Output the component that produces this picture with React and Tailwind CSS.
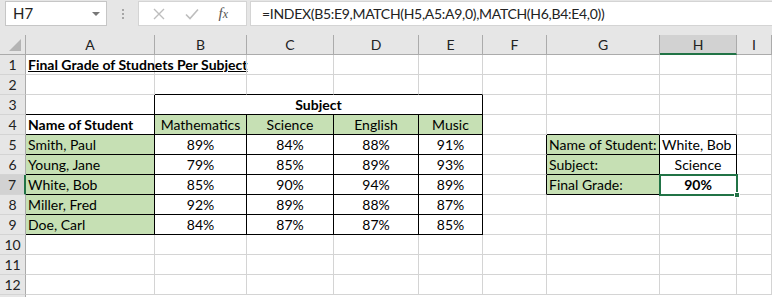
import { useState } from "react";

const cols = ["A", "B", "C", "D", "E", "F", "G", "H", "I"];

const grades = [
    ["Smith, Paul", "89%", "84%", "88%", "91%"],
    ["Young, Jane", "79%", "85%", "89%", "93%"],
    ["White, Bob", "85%", "90%", "94%", "89%"],
    ["Miller, Fred", "92%", "89%", "88%", "87%"],
    ["Doe, Carl", "84%", "87%", "87%", "85%"],
];

const lookup = [
    ["Name of Student:", "White, Bob", "text-left"],
    ["Subject:", "Science", "text-center"],
    ["Final Grade:", "90%", "text-center font-bold"],
];

// cell with its own right/bottom gridline, like Excel draws them
const Cell = ({ children, r = "grid", b = "grid", className = "" }) => {
    const right = r === "black" ? "border-r-black" : "border-r-[#d4d4d4]";
    const bottom = b === "black" ? "border-b-black" : "border-b-[#d4d4d4]";
    return (
        <div className={`h-[20px] border-r border-b ${right} ${bottom} px-[2px] leading-[19px] whitespace-nowrap overflow-visible ${className}`}>
            {children}
        </div>
    );
};

const RowHead = ({ n, active }) => (
    <div
        className={`h-[20px] border-b border-r border-b-[#d4d4d4] text-center leading-[19px] text-[#222] ${
            active ? "bg-[#d2d2d2] border-r-2 border-r-[#217346]" : "bg-[#e6e6e6] border-r-[#ababab]"
        }`}
    >
        {n}
    </div>
);

const App = () => {
    const [active] = useState("H7");

    return (
        <div className="w-[772px] h-[297px] overflow-hidden bg-white font-['Lato',sans-serif] text-[14px] text-black">
            {/* formula bar */}
            <div className="h-[35px] bg-[#e6e6e6] flex items-start pt-[1px]">
                <div className="ml-[5px] w-[102px] h-[25px] bg-white border border-[#c6c6c6] flex items-center justify-between pl-[7px] pr-[6px]">
                    <span className="text-[15px] text-[#222]">{active}</span>
                    <span className="w-0 h-0 border-l-[4px] border-r-[4px] border-t-[4px] border-l-transparent border-r-transparent border-t-[#777]" />
                </div>
                <div className="w-[31px] h-[25px] flex flex-col items-center justify-center gap-[2px]">
                    <span className="w-[2px] h-[2px] bg-[#a6a6a6]" />
                    <span className="w-[2px] h-[2px] bg-[#a6a6a6]" />
                    <span className="w-[2px] h-[2px] bg-[#a6a6a6]" />
                </div>
                <div className="w-[109px] h-[25px] bg-white border border-[#d4d4d4] flex items-center justify-around pl-[4px] pr-[8px]">
                    <svg width="12" height="12" viewBox="0 0 12 12">
                        <path d="M1 1 L11 11 M11 1 L1 11" stroke="#bdbdbd" strokeWidth="1.4" fill="none" />
                    </svg>
                    <svg width="14" height="12" viewBox="0 0 14 12">
                        <path d="M1 6.5 L5 10.5 L13 1.5" stroke="#bdbdbd" strokeWidth="1.6" fill="none" />
                    </svg>
                    <span className="font-['Liberation_Serif',serif] italic text-[15px] text-[#555]">
                        f<span className="text-[12px]">x</span>
                    </span>
                </div>
                <div className="ml-[3px] flex-1 h-[25px] bg-white border border-[#d4d4d4] border-r-0 flex items-center pl-[11px]">
                    <span className="text-[14px] tracking-[-0.3px] text-[#222]">=INDEX(B5:E9,MATCH(H5,A5:A9,0),MATCH(H6,B4:E4,0))</span>
                </div>
            </div>

            {/* sheet */}
            <div className="grid grid-cols-[26px_129px_92px_87px_85px_64px_64px_113px_77px_1fr]">
                {/* column headers */}
                <div className="h-[20px] bg-[#e6e6e6] border-r border-b border-[#ababab] relative">
                    <svg className="absolute right-[4px] bottom-[3px]" width="12" height="12" viewBox="0 0 12 12">
                        <path d="M12 0 L12 12 L0 12 Z" fill="#b4b4b4" />
                    </svg>
                </div>
                {cols.map((c) => (
                    <div
                        key={c}
                        className={`h-[20px] border-r border-r-[#ababab] text-center leading-[19px] text-[#222] ${
                            c === "H" ? "bg-[#d2d2d2] border-b-2 border-b-[#217346]" : "bg-[#e6e6e6] border-b border-b-[#ababab]"
                        }`}
                    >
                        {c}
                    </div>
                ))}

                {/* row 1 */}
                <RowHead n={1} />
                <Cell className="font-bold underline">Final Grade of Studnets Per Subject</Cell>
                <Cell /><Cell /><Cell /><Cell /><Cell /><Cell /><Cell /><Cell />

                {/* row 2 */}
                <RowHead n={2} />
                <Cell />
                <Cell b="black" /><Cell b="black" /><Cell b="black" /><Cell b="black" />
                <Cell /><Cell /><Cell /><Cell />

                {/* row 3 */}
                <RowHead n={3} />
                <Cell r="black" b="black" />
                <div className="col-span-4 h-[20px] border-r border-b border-black text-center font-bold leading-[19px]">Subject</div>
                <Cell /><Cell /><Cell /><Cell />

                {/* row 4 */}
                <RowHead n={4} />
                <Cell r="black" b="black" className="font-bold">Name of Student</Cell>
                {["Mathematics", "Science", "English", "Music"].map((s) => (
                    <Cell key={s} r="black" b="black" className="bg-[#c6e0b4] text-center">{s}</Cell>
                ))}
                <Cell /><Cell b="black" /><Cell b="black" /><Cell />

                {/* rows 5-9 */}
                {grades.map((row, i) => {
                    const n = i + 5;
                    const lk = lookup[i];
                    return [
                        <RowHead key={`h${n}`} n={n} active={n === 7} />,
                        <Cell key={`a${n}`} r="black" b="black" className="bg-[#c6e0b4]">{row[0]}</Cell>,
                        ...row.slice(1).map((v, j) => (
                            <Cell key={`v${n}${j}`} r="black" b="black" className="text-center">{v}</Cell>
                        )),
                        <Cell key={`f${n}`} r={lk ? "black" : "grid"} />,
                        lk ? (
                            <Cell key={`g${n}`} r="black" b="black" className="bg-[#c6e0b4]">{lk[0]}</Cell>
                        ) : (
                            <Cell key={`g${n}`} />
                        ),
                        lk ? (
                            <div key={`x${n}`} className="relative">
                                <Cell r="black" b="black" className={lk[2]}>{lk[1]}</Cell>
                                {n === 7 && (
                                    <div className="absolute -left-[1px] -top-[1px] w-[79px] h-[22px] border-2 border-[#217346]">
                                        <span className="absolute -right-[4px] -bottom-[4px] w-[6px] h-[6px] bg-[#217346] border border-white" />
                                    </div>
                                )}
                            </div>
                        ) : (
                            <Cell key={`x${n}`} />
                        ),
                        <Cell key={`i${n}`} />,
                    ];
                })}

                {/* rows 10-12 */}
                {[10, 11, 12].map((n) => [
                    <RowHead key={`h${n}`} n={n} />,
                    ...cols.map((c) => <Cell key={`${c}${n}`} />),
                ])}
                <div className="h-[4px] bg-[#e6e6e6] border-r border-r-[#ababab]" />
            </div>
        </div>
    );
};

export default App;
